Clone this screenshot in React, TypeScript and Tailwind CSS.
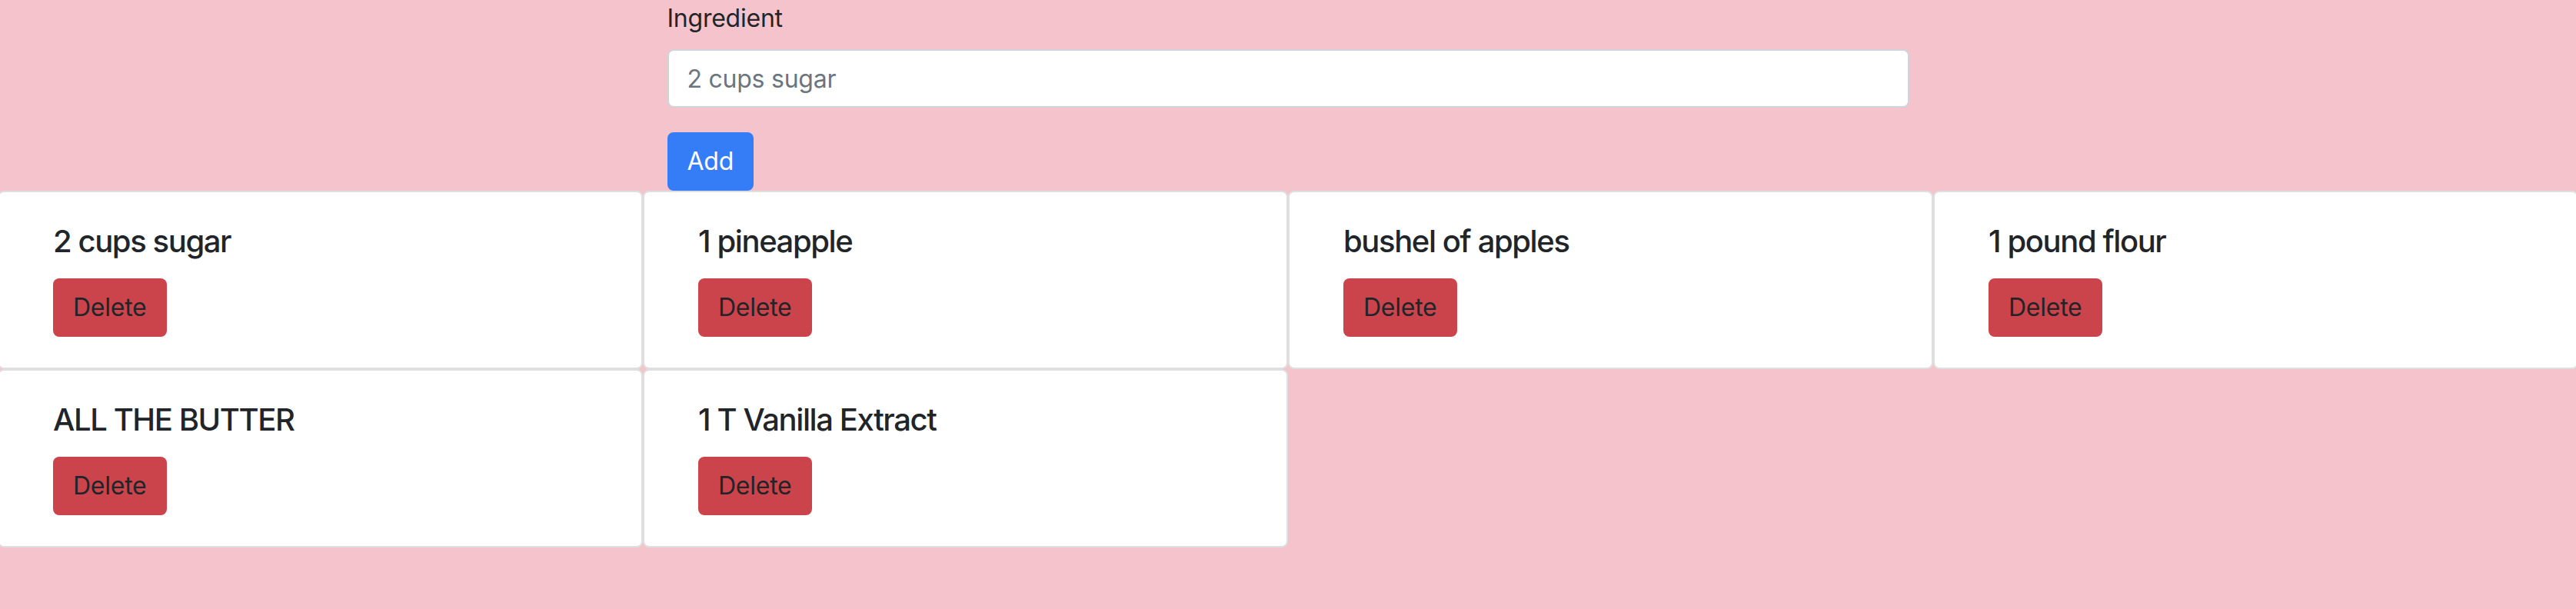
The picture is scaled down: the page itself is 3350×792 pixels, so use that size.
import { useState } from "react";

const initialItems = [
  "2 cups sugar",
  "1 pineapple",
  "bushel of apples",
  "1 pound flour",
  "ALL THE BUTTER",
  "1 T Vanilla Extract",
];

const IngredientCard = ({ name, onDelete }: { name: string; onDelete: () => void }) => {
  return (
    <div className="bg-white border-2 border-[#dfdfdf] rounded-lg px-[70px] py-10">
      <h5 className="text-[40px] leading-[48px] font-medium tracking-[-0.035em] text-[#212529] mb-6">
        {name}
      </h5>
      <button
        onClick={onDelete}
        className="h-[76px] px-6 border-2 border-transparent rounded-lg bg-[#cc444b] text-[32px] leading-[48px] text-[#212529]"
      >
        Delete
      </button>
    </div>
  );
};

const App = () => {
  const [items, setItems] = useState(initialItems);
  const [value, setValue] = useState("");

  const addHandler = () => {
    if (!value.trim()) return;
    setItems([...items, value.trim()]);
    setValue("");
  };

  return (
    <div className="min-h-screen bg-[#f5c3cb] overflow-hidden font-['Inter','Liberation_Sans',sans-serif] tracking-[-0.015em] text-[#212529]">
      <div className="w-1/2 mx-auto px-[30px]">
        <label htmlFor="ingredient" className="block text-[32px] leading-[48px] mb-4">
          Ingredient
        </label>
        <input
          id="ingredient"
          value={value}
          onChange={(e) => setValue(e.target.value)}
          placeholder="2 cups sugar"
          className="block w-full h-[76px] px-6 mb-8 bg-white border-2 border-[#ced4da] rounded-lg text-[32px] text-[#495057] placeholder:text-[#6c757d] focus:outline-none"
        />
        <button
          onClick={addHandler}
          className="h-[76px] px-6 border-2 border-transparent rounded-lg bg-[#357df6] text-[32px] leading-[48px] text-white"
        >
          Add
        </button>
      </div>
      <div className="grid grid-cols-4 -mx-[3px]">
        {items.map((item, i) => (
          <IngredientCard
            key={item + i}
            name={item}
            onDelete={() => setItems(items.filter((_, idx) => idx !== i))}
          />
        ))}
      </div>
    </div>
  );
};

export default App;
